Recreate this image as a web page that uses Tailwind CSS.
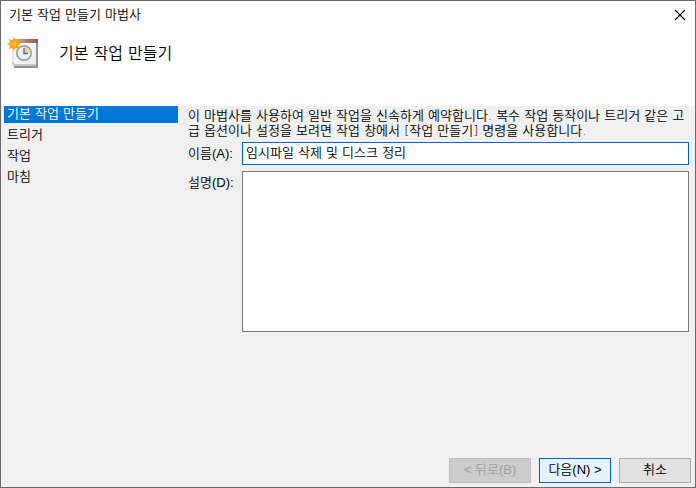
<!DOCTYPE html>
<html lang="ko">
  <head>
    <meta charset="UTF-8" />
    <meta name="viewport" content="width=device-width, initial-scale=1.0" />
    <title>기본 작업 만들기 마법사</title>
    <script src="https://cdn.jsdelivr.net/npm/@tailwindcss/browser@4"></script>
  </head>
  <body
    class="min-h-screen flex flex-col border border-[#6b696b] bg-[#f0f0f0] text-[13px] leading-4 text-black font-[350] font-['DejaVu_Sans','Noto_Sans_CJK_KR',sans-serif]"
  >
    <!-- Title bar -->
    <div class="flex items-center justify-between h-7 pl-2 pr-[3px] bg-white">
      <span>기본 작업 만들기 마법사</span>
      <button type="button" aria-label="닫기" class="p-1">
        <svg class="size-4" viewBox="0 0 16 16" fill="none" stroke="currentColor" stroke-width="1.1">
          <path d="M3 3l10 10M13 3L3 13" />
        </svg>
      </button>
    </div>

    <!-- Header -->
    <header class="flex items-start gap-4 h-[77px] pl-1.5 pt-2 bg-white">
      <svg class="size-9" viewBox="0 0 36 36" fill="none">
        <defs>
          <linearGradient id="bar" x1="0" x2="1">
            <stop offset="0" stop-color="#d8a68e" />
            <stop offset="1" stop-color="#8b5a4c" />
          </linearGradient>
          <linearGradient id="page" x1="0" x2="1" y1="0" y2="1">
            <stop offset="0" stop-color="#ffffff" />
            <stop offset="1" stop-color="#ececec" />
          </linearGradient>
          <radialGradient id="sun">
            <stop offset="0" stop-color="#ffc52e" />
            <stop offset="1" stop-color="#f59c12" />
          </radialGradient>
        </defs>
        <path d="M7 27h22V5h2v26H7z" fill="#929292" />
        <path d="M5 25h24v4H7l-2-2z" fill="#c4c4c4" />
        <path d="M6 5h23v22H8l-2-2z" fill="url(#page)" />
        <path d="M6 25V10M5.500 25.500l2 2H29" stroke="#c8c8c8" />
        <path d="M8 2h23v4H8z" fill="url(#bar)" />
        <circle cx="17" cy="16" r="8" fill="#9a9da1" />
        <circle cx="17" cy="16" r="6.300" fill="#eef3f8" />
        <path d="M17 16V10a6 6 0 0 1 6 6z" fill="#f3d79a" />
        <path d="M17 11v5.500h4" stroke="#5b6670" stroke-width="1.300" />
        <path
          d="M7 0l1.500 3.200L12 2l-1 3.500L14.500 7 11 8.500l1 3.500-3.500-1.200L7 14l-1.500-3.200L2 12l1-3.500L0 7l3-1.500L2 2l3.500 1.200z"
          fill="#f5a81c"
        />
        <circle cx="7" cy="7" r="4.500" fill="url(#sun)" />
      </svg>
      <h1 class="pt-1 text-base leading-[26px] font-[350]">기본 작업 만들기</h1>
    </header>

    <div class="flex flex-1 gap-2.5 pl-[3px] pr-1.5">
      <!-- Steps -->
      <ol class="flex flex-col gap-1 w-[174px] shrink-0">
        <li class="h-[17px] px-[3px] leading-4 bg-[#0078d7] text-white" aria-current="step">기본 작업 만들기</li>
        <li class="h-[17px] px-[3px] leading-4">트리거</li>
        <li class="h-[17px] px-[3px] leading-4">작업</li>
        <li class="h-[17px] px-[3px] leading-4">마침</li>
      </ol>

      <!-- Form -->
      <form class="flex-1 pt-0.5">
        <p class="leading-[15px]">
          이 마법사를 사용하여 일반 작업을 신속하게 예약합니다. 복수 작업 동작이나 트리거 같은 고급 옵션이나 설정을 보려면 작업 창에서 [작업 만들기] 명령을 사용합니다.
        </p>
        <div class="flex items-start mt-1">
          <label for="name" class="w-[54px] pt-1 font-['Liberation_Sans','Noto_Sans_CJK_KR',sans-serif]">이름(A):</label>
          <input
            id="name"
            type="text"
            value="임시파일 삭제 및 디스크 정리"
            class="flex-1 h-[23px] px-[3px] pb-1 bg-white border border-[#0067b8] outline-none"
          />
        </div>
        <div class="flex items-start mt-1.5">
          <label for="desc" class="w-[54px] pt-1 font-['Liberation_Sans','Noto_Sans_CJK_KR',sans-serif]">설명(D):</label>
          <textarea
            id="desc"
            class="flex-1 h-[161px] px-[3px] bg-white border border-[#7a7a7a] outline-none resize-none"
          ></textarea>
        </div>
      </form>
    </div>

    <!-- Buttons -->
    <footer
      class="flex justify-end gap-2 pr-1 pb-1 font-['Liberation_Sans','Noto_Sans_CJK_KR',sans-serif]"
    >
      <button type="button" disabled class="w-[82px] h-[25px] pb-0.5 bg-[#cccccc] border border-[#bfbfbf] text-[#a0a0a0]">&lt; 뒤로(B)</button>
      <button type="button" class="w-[72px] h-[25px] pb-0.5 bg-[#e5f1fb] border border-[#0067b8]">다음(N) &gt;</button>
      <button type="button" class="w-[72px] h-[25px] pb-0.5 bg-[#e1e1e1] border border-[#adadad]">취소</button>
    </footer>
  </body>
</html>
